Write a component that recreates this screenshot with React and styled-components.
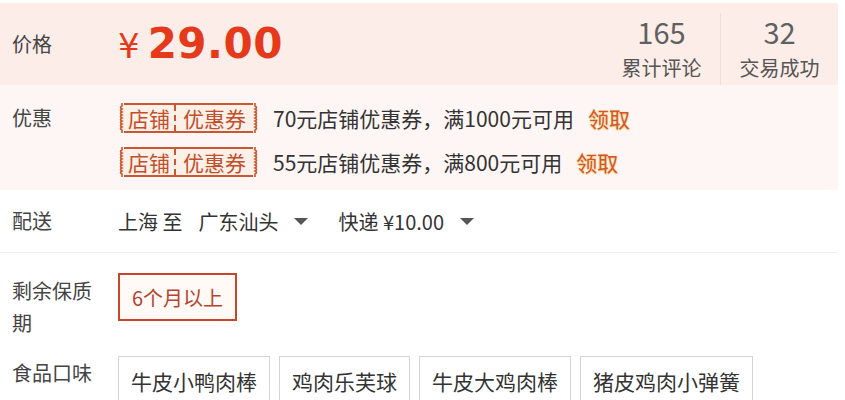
import React from 'react';
import styled, { createGlobalStyle } from 'styled-components';

const GlobalStyle = createGlobalStyle`
  html, body {
    margin: 0;
    padding: 0;
    background: #ffffff;
  }
  body {
    font-family: "Noto Sans CJK SC", "Noto Sans", sans-serif;
    color: #3c3c3c;
  }
`;

const Page = styled.div`
  width: 838px;
  padding-top: 3px;
`;

const Row = styled.div`
  display: flex;
  align-items: ${(p) => p.align || 'center'};
`;

const Label = styled.div`
  flex: 0 0 auto;
  width: 92px;
  padding-left: 12px;
  margin-right: 14px;
  font-size: 20px;
  line-height: 32px;
  color: #444;
`;

const PriceRow = styled(Row)`
  height: 82px;
  background: #fcede8;
`;

const Price = styled.div`
  display: flex;
  align-items: baseline;
  color: #e5391b;
  margin-top: -2px;
`;

const Yen = styled.span`
  font-family: "DejaVu Sans", sans-serif;
  font-size: 34px;
  margin-right: 8px;
`;

const Amount = styled.span`
  font-family: "DejaVu Sans", sans-serif;
  font-weight: bold;
  font-size: 42px;
  letter-spacing: 0.5px;
`;

const Stats = styled.div`
  margin-left: auto;
  align-self: stretch;
  display: flex;
  padding-top: 10px;
`;

const Stat = styled.div`
  width: 117px;
  display: flex;
  flex-direction: column;
  align-items: center;
  border-left: ${(p) => (p.divider ? '1px solid #f3dcd3' : 'none')};
`;

const StatNum = styled.div`
  font-size: 29px;
  line-height: 36px;
  color: #606060;
`;

const StatLabel = styled.div`
  font-size: 20px;
  line-height: 38px;
  color: #555;
`;

const CouponSection = styled(Row)`
  background: #fdf6f4;
  padding: 11px 0 6px;
  align-items: flex-start;
`;

const CouponList = styled.div`
  display: flex;
  flex-direction: column;
`;

const CouponLine = styled.div`
  display: flex;
  align-items: center;
  height: 44px;
  font-size: 21px;
  color: #333;
`;

const Ticket = styled.span`
  display: inline-flex;
  align-items: stretch;
  height: 30px;
  margin-right: 14px;
  color: #c24e2a;
  font-size: 21px;
`;

const TicketBody = styled.span`
  display: flex;
  align-items: center;
  background: #fdf0e8;
  border-top: 2px solid #c9572f;
  border-bottom: 2px solid #c9572f;
  line-height: 1;
`;

const TicketPart = styled.span`
  padding: 0 ${(p) => p.pad || 4}px;
  border-left: ${(p) => (p.dashed ? '2px dashed #c9572f' : 'none')};
  height: 100%;
  display: flex;
  align-items: center;
`;

const Claim = styled.span`
  margin-left: 14px;
  color: #d2552b;
  font-size: 21px;
  text-shadow: 0 0 2px #f8d48a, 0 1px 1px #f4c97a;
`;

const Edge = ({ flip }) => (
  <svg width="6" height="30" viewBox="0 0 6 30" style={{ display: 'block', transform: flip ? 'scaleX(-1)' : 'none' }}>
    <rect x="3" y="0" width="3" height="30" fill="#fdf0e8" />
    <path
      d="M4 0 L4 3 Q1 4.5 4 6 Q1 7.5 4 9 Q1 10.5 4 12 Q1 13.5 4 15 Q1 16.5 4 18 Q1 19.5 4 21 Q1 22.5 4 24 Q1 25.5 4 27 L4 30"
      fill="none"
      stroke="#c9572f"
      strokeWidth="1.6"
    />
  </svg>
);

const Coupon = ({ text }) => (
  <CouponLine>
    <Ticket>
      <Edge />
      <TicketBody>
        <TicketPart pad={4}>店铺</TicketPart>
        <TicketPart dashed pad={7}>优惠券</TicketPart>
      </TicketBody>
      <Edge flip />
    </Ticket>
    <span>{text}</span>
    <Claim>领取</Claim>
  </CouponLine>
);

const DeliveryRow = styled(Row)`
  height: 62px;
  border-bottom: 1px solid #eeeeee;
  font-size: 20px;
  color: #333;
`;

const Select = styled.span`
  display: inline-flex;
  align-items: center;
  margin-right: ${(p) => p.mr || 0}px;
`;

const Caret = styled.span`
  display: inline-block;
  width: 0;
  height: 0;
  margin-left: 16px;
  border-left: 7px solid transparent;
  border-right: 7px solid transparent;
  border-top: 7px solid #555;
`;

const ShelfRow = styled(Row)`
  padding-top: 22px;
  align-items: flex-start;
`;

const SelectedTag = styled.div`
  box-sizing: border-box;
  width: 119px;
  height: 48px;
  display: flex;
  align-items: center;
  justify-content: center;
  border: 2px solid #c8452c;
  background: #fffaf6;
  color: #b5432d;
  font-size: 20px;
  margin-top: -2px;
`;

const FlavorRow = styled(Row)`
  margin-top: 18px;
  align-items: flex-start;
`;

const Options = styled.div`
  display: flex;
  gap: 9px;
`;

const Option = styled.div`
  box-sizing: border-box;
  height: 50px;
  padding: 0 12px;
  display: flex;
  align-items: center;
  border: 1px solid #d4d4d4;
  font-size: 21px;
  color: #333;
  margin-top: -1px;
`;

export default function App() {
  return (
    <>
      <GlobalStyle />
      <Page>
        <PriceRow>
          <Label>价格</Label>
          <Price>
            <Yen>¥</Yen>
            <Amount>29.00</Amount>
          </Price>
          <Stats>
            <Stat>
              <StatNum>165</StatNum>
              <StatLabel>累计评论</StatLabel>
            </Stat>
            <Stat divider>
              <StatNum>32</StatNum>
              <StatLabel>交易成功</StatLabel>
            </Stat>
          </Stats>
        </PriceRow>

        <CouponSection>
          <Label style={{ marginTop: 6 }}>优惠</Label>
          <CouponList>
            <Coupon text="70元店铺优惠券，满1000元可用" />
            <Coupon text="55元店铺优惠券，满800元可用" />
          </CouponList>
        </CouponSection>

        <DeliveryRow>
          <Label>配送</Label>
          <Select mr={16}>上海 至</Select>
          <Select mr={30}>
            广东汕头
            <Caret />
          </Select>
          <Select>
            快递 ¥10.00
            <Caret />
          </Select>
        </DeliveryRow>

        <ShelfRow>
          <Label>剩余保质期</Label>
          <SelectedTag>6个月以上</SelectedTag>
        </ShelfRow>

        <FlavorRow>
          <Label>食品口味</Label>
          <Options>
            <Option>牛皮小鸭肉棒</Option>
            <Option>鸡肉乐芙球</Option>
            <Option>牛皮大鸡肉棒</Option>
            <Option>猪皮鸡肉小弹簧</Option>
          </Options>
        </FlavorRow>
      </Page>
    </>
  );
}
